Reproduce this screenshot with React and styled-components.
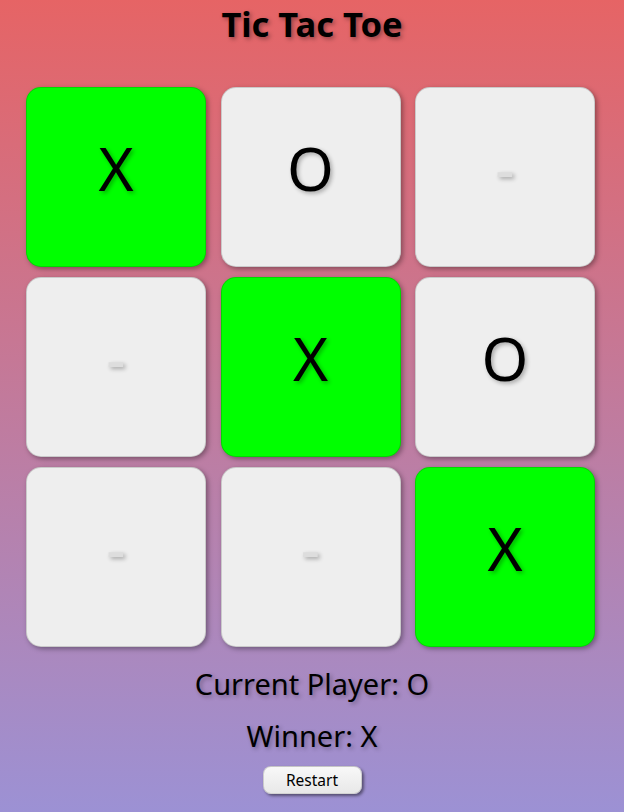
import React from 'react';
import styled, { createGlobalStyle } from 'styled-components';

const GlobalStyle = createGlobalStyle`
  html, body {
    margin: 0;
    padding: 0;
  }
  body {
    font-family: 'Noto Sans', 'Open Sans', sans-serif;
  }
`;

const Page = styled.div`
  min-height: 100vh;
  display: flex;
  flex-direction: column;
  align-items: center;
  background: linear-gradient(180deg, #e66465 0%, #9198e5 115%);
`;

const Title = styled.h1`
  margin: 0;
  font-size: 34.5px;
  line-height: 47px;
  font-weight: 700;
  color: #000;
  text-shadow: 2px 2px 4px rgba(0, 0, 0, 0.35);
`;

const Board = styled.div`
  display: grid;
  grid-template-columns: repeat(3, 180px);
  grid-auto-rows: 180px;
  column-gap: 14.5px;
  row-gap: 10px;
  margin: 40px 3px 0 0;
`;

const Cell = styled.button`
  display: flex;
  align-items: center;
  justify-content: center;
  padding: 0 0 18px;
  border: 1px solid rgba(0, 0, 0, 0.15);
  border-radius: 15px;
  background: ${(p) => (p.$win ? '#00ff00' : '#eeeeee')};
  box-shadow: 2px 2px 5px rgba(0, 0, 0, 0.35);
  font-family: 'Noto Sans', 'Open Sans', sans-serif;
  font-size: 60px;
  color: ${(p) => (p.$empty ? '#dddddd' : '#000')};
  text-shadow: 2px 2px 4px rgba(0, 0, 0, 0.3);
  cursor: pointer;
`;

const Status = styled.p`
  margin: ${(p) => p.$top}px 0 0;
  font-size: 29px;
  line-height: 38px;
  color: #000;
  text-shadow: 2px 2px 4px rgba(0, 0, 0, 0.3);
`;

const RestartButton = styled.button`
  margin-top: 11px;
  width: 99px;
  height: 28px;
  border: 1px solid rgba(0, 0, 0, 0.15);
  border-radius: 8px;
  background: linear-gradient(#f8f8f8, #e8e8e8);
  box-shadow: 2px 2px 3px rgba(0, 0, 0, 0.45);
  font-family: 'Noto Sans', 'Open Sans', sans-serif;
  font-size: 15.5px;
  color: #000;
  cursor: pointer;
`;

const board = ['X', 'O', '', '', 'X', 'O', '', '', 'X'];
const winLine = [0, 4, 8];

const App = () => {
  return (
    <Page>
      <GlobalStyle />
      <Title>Tic Tac Toe</Title>
      <Board>
        {board.map((v, i) => (
          <Cell key={i} $win={winLine.includes(i)} $empty={!v}>
            {v || '-'}
          </Cell>
        ))}
      </Board>
      <Status $top={18}>Current Player: O</Status>
      <Status $top={14}>Winner: X</Status>
      <RestartButton>Restart</RestartButton>
    </Page>
  );
};

export default App;
